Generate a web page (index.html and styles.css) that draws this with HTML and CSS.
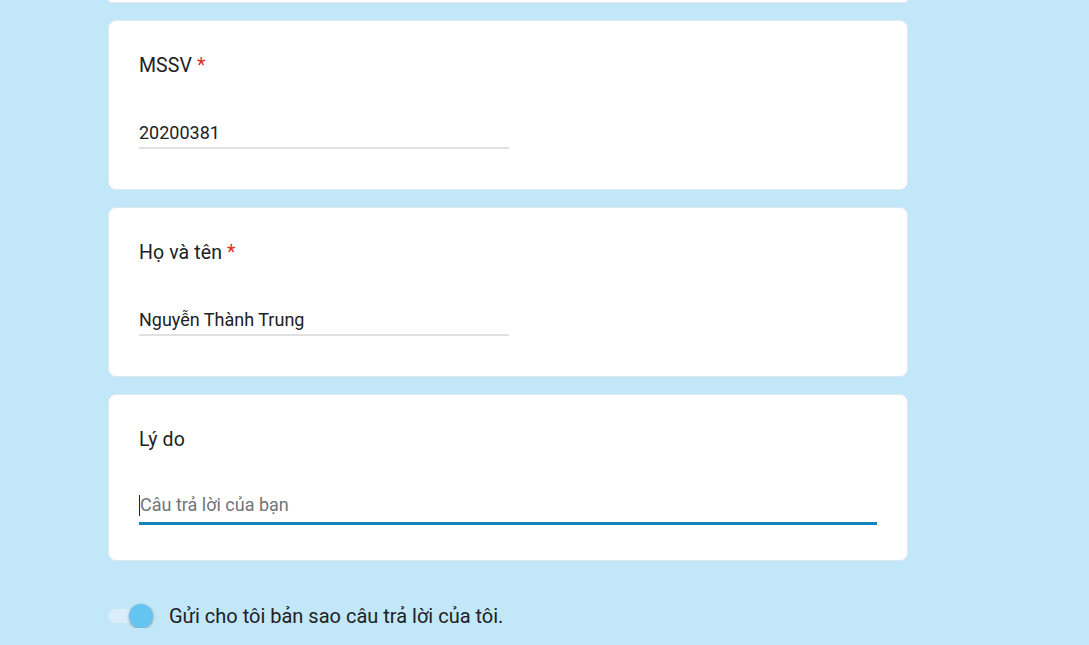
FILE: index.html
```html
<!DOCTYPE html>
<html lang="vi">
<head>
<meta charset="utf-8">
<title>Form</title>
<link rel="stylesheet" href="styles.css">
</head>
<body>
<div class="page">
  <div class="card card-tail"></div>

  <div class="card">
    <div class="q-title">MSSV <span class="req">*</span></div>
    <div class="field"><span class="value">20200381</span></div>
  </div>

  <div class="card">
    <div class="q-title">Họ và tên <span class="req">*</span></div>
    <div class="field"><span class="value">Nguyễn Thành Trung</span></div>
  </div>

  <div class="card card-last">
    <div class="q-title">Lý do</div>
    <div class="field field-wide field-focus"><span class="caret"></span><span class="placeholder">Câu trả lời của bạn</span></div>
  </div>

  <div class="copy-row">
    <div class="switch"><span class="track"></span><span class="thumb"></span></div>
    <span class="copy-text">Gửi cho tôi bản sao câu trả lời của tôi.</span>
  </div>
</div>
</body>
</html>
```

FILE: styles.css
```css
html, body {
  margin: 0;
  padding: 0;
}
body {
  background: #c2e7f8;
  font-family: Roboto, "Liberation Sans", Arial, sans-serif;
  color: #202124;
  overflow: hidden;
}
.page {
  width: 800px;
  margin-left: 108px;
  display: flex;
  flex-direction: column;
  gap: 17px;
}
.card {
  background: #fff;
  border: 1px solid #dfe9ef;
  border-radius: 8px;
  padding: 33px 30px 0 30px;
  height: 170px;
  box-sizing: border-box;
}
.card-tail {
  height: 3px;
  padding: 0;
  border-top: none;
  border-radius: 0 0 8px 8px;
}
.card-last {
  height: 167px;
}
.q-title {
  font-size: 19.5px;
  line-height: 24px;
  letter-spacing: 0.1px;
}
.req {
  color: #d93025;
}
.field {
  margin-top: 41px;
  width: 370px;
  height: 28px;
  border-bottom: 2px solid #e0e0e0;
  font-size: 18px;
  line-height: 26px;
  display: flex;
  align-items: center;
}
.field-wide {
  width: auto;
}
.field-focus {
  box-sizing: border-box;
  margin-top: 42px;
  height: 31px;
  padding-bottom: 6px;
  border-bottom: 3px solid #1485ba;
}
.caret {
  width: 1px;
  height: 21px;
  background: #202124;
}
.placeholder {
  color: #70757a;
}
.copy-row {
  margin-top: 26px;
  display: flex;
  align-items: center;
  gap: 17px;
}
.switch {
  position: relative;
  width: 44px;
  height: 24px;
}
.track {
  position: absolute;
  left: 0;
  top: 5px;
  width: 42px;
  height: 14px;
  border-radius: 7px;
  background: #d9eefa;
}
.thumb {
  position: absolute;
  left: 21px;
  top: 0;
  width: 24px;
  height: 24px;
  border-radius: 50%;
  background: #64c5f0;
  box-shadow: 0 1px 3px rgba(0, 0, 0, 0.35);
}
.copy-text {
  font-size: 20px;
  line-height: 24px;
}
```
